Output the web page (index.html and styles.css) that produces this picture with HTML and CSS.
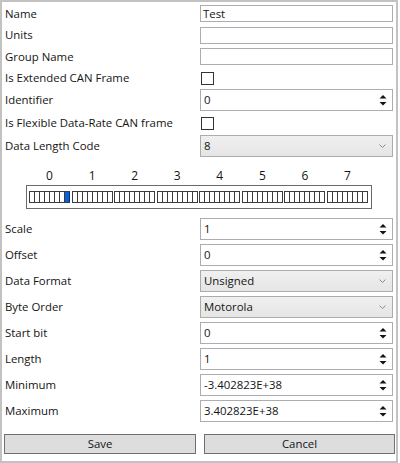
FILE: index.html
```html
<!DOCTYPE html>
<html>
<head>
<meta charset="utf-8">
<link rel="stylesheet" href="styles.css">
</head>
<body>
<div class="frame">
  <div class="form">
    <div class="row r21"><span class="label">Name</span><div class="text">Test</div></div>
    <div class="row r22"><span class="label">Units</span><div class="text"></div></div>
    <div class="row r21"><span class="label">Group Name</span><div class="text"></div></div>
    <div class="row r22"><span class="label">Is Extended CAN Frame</span><div><span class="check"></span></div></div>
    <div class="row r22"><span class="label">Identifier</span><div class="spin"><span class="val">0</span><svg class="arrows" width="8" height="14" viewBox="0 0 8 14"><polygon points="0.5,5.5 4,2 7.5,5.5"/><polygon points="0.5,9 4,12.5 7.5,9"/></svg></div></div>
    <div class="row r24"><span class="label">Is Flexible Data-Rate CAN frame</span><div><span class="check"></span></div></div>
    <div class="row r22"><span class="label">Data Length Code</span><div class="combo"><span class="val">8</span><svg class="chev" width="7" height="4" viewBox="0 0 7 4"><polyline points="0.5,0.5 3.5,3.5 6.5,0.5"/></svg></div></div>
  </div>

  <div class="bits">
    <div class="bit-labels">
      <span>0</span><span>1</span><span>2</span><span>3</span><span>4</span><span>5</span><span>6</span><span>7</span>
    </div>
    <div class="bit-box">
      <div class="byte"><i></i><i></i><i></i><i></i><i></i><i></i><i></i><i class="on"></i></div>
      <div class="byte"><i></i><i></i><i></i><i></i><i></i><i></i><i></i><i></i></div>
      <div class="byte"><i></i><i></i><i></i><i></i><i></i><i></i><i></i><i></i></div>
      <div class="byte"><i></i><i></i><i></i><i></i><i></i><i></i><i></i><i></i></div>
      <div class="byte"><i></i><i></i><i></i><i></i><i></i><i></i><i></i><i></i></div>
      <div class="byte"><i></i><i></i><i></i><i></i><i></i><i></i><i></i><i></i></div>
      <div class="byte"><i></i><i></i><i></i><i></i><i></i><i></i><i></i><i></i></div>
      <div class="byte"><i></i><i></i><i></i><i></i><i></i><i></i><i></i><i></i></div>
    </div>
  </div>

  <div class="form lower">
    <div class="row r26"><span class="label">Scale</span><div class="spin"><span class="val">1</span><svg class="arrows" width="8" height="14" viewBox="0 0 8 14"><polygon points="0.5,5.5 4,2 7.5,5.5"/><polygon points="0.5,9 4,12.5 7.5,9"/></svg></div></div>
    <div class="row r26"><span class="label">Offset</span><div class="spin"><span class="val">0</span><svg class="arrows" width="8" height="14" viewBox="0 0 8 14"><polygon points="0.5,5.5 4,2 7.5,5.5"/><polygon points="0.5,9 4,12.5 7.5,9"/></svg></div></div>
    <div class="row r26"><span class="label">Data Format</span><div class="combo"><span class="val">Unsigned</span><svg class="chev" width="7" height="4" viewBox="0 0 7 4"><polyline points="0.5,0.5 3.5,3.5 6.5,0.5"/></svg></div></div>
    <div class="row r26"><span class="label">Byte Order</span><div class="combo"><span class="val">Motorola</span><svg class="chev" width="7" height="4" viewBox="0 0 7 4"><polyline points="0.5,0.5 3.5,3.5 6.5,0.5"/></svg></div></div>
    <div class="row r26"><span class="label">Start bit</span><div class="spin"><span class="val">0</span><svg class="arrows" width="8" height="14" viewBox="0 0 8 14"><polygon points="0.5,5.5 4,2 7.5,5.5"/><polygon points="0.5,9 4,12.5 7.5,9"/></svg></div></div>
    <div class="row r26"><span class="label">Length</span><div class="spin"><span class="val">1</span><svg class="arrows" width="8" height="14" viewBox="0 0 8 14"><polygon points="0.5,5.5 4,2 7.5,5.5"/><polygon points="0.5,9 4,12.5 7.5,9"/></svg></div></div>
    <div class="row r26"><span class="label">Minimum</span><div class="spin"><span class="val">-3.402823E+38</span><svg class="arrows" width="8" height="14" viewBox="0 0 8 14"><polygon points="0.5,5.5 4,2 7.5,5.5"/><polygon points="0.5,9 4,12.5 7.5,9"/></svg></div></div>
    <div class="row r26"><span class="label">Maximum</span><div class="spin"><span class="val">3.402823E+38</span><svg class="arrows" width="8" height="14" viewBox="0 0 8 14"><polygon points="0.5,5.5 4,2 7.5,5.5"/><polygon points="0.5,9 4,12.5 7.5,9"/></svg></div></div>
  </div>

  <div class="buttons">
    <div class="btn save">Save</div>
    <div class="btn cancel">Cancel</div>
  </div>
</div>
</body>
</html>
```

FILE: styles.css
```css
html, body {
  margin: 0;
  padding: 0;
  background: #ffffff;
}

body {
  font-family: "Open Sans", "Liberation Sans", sans-serif;
  font-size: 11.4px;
  color: #141414;
}

.frame {
  box-sizing: border-box;
  width: 398px;
  height: 463px;
  border: 2px solid #c2c2c2;
  padding-top: 1px;
  background: #ffffff;
}

.form {
  display: flex;
  flex-direction: column;
}

.row {
  display: grid;
  grid-template-columns: 195px 193px;
  padding-left: 3px;
  align-items: center;
}

.r21 { height: 21px; }
.r22 { height: 22px; }
.r24 { height: 24px; }
.r26 { height: 26px; }

.label {
  white-space: nowrap;
  line-height: 14px;
}

.text {
  box-sizing: border-box;
  height: 17px;
  border: 1px solid #abadb3;
  background: #fff;
  padding-left: 2px;
  line-height: 15px;
}

.check {
  display: block;
  box-sizing: border-box;
  width: 13px;
  height: 13px;
  margin-left: 1px;
  border: 1px solid #333333;
  background: #ffffff;
}

.spin, .combo {
  box-sizing: border-box;
  height: 22px;
  display: flex;
  align-items: center;
  justify-content: space-between;
  padding-left: 3px;
}

.spin {
  border: 1px solid #abadb3;
  background: #fff;
  padding-right: 5px;
}

.combo {
  border: 1px solid #acacac;
  background: linear-gradient(#f0f0f0, #e5e5e5);
  padding-right: 6px;
}

.val {
  line-height: 14px;
}

.arrows polygon {
  fill: #141414;
}

.chev polyline {
  fill: none;
  stroke: #8a8a8a;
  stroke-width: 1;
}

.bits {
  margin-left: 24px;
  width: 346px;
}

.bit-labels {
  display: flex;
  justify-content: space-between;
  margin-top: 12px;
  height: 14px;
  padding: 0 4px 0 3px;
  font-size: 12px;
  line-height: 14px;
}

.bit-labels span {
  width: 41px;
  text-align: center;
}

.bit-box {
  box-sizing: border-box;
  margin-top: 2px;
  height: 24px;
  border: 1px solid #6a6a6a;
  padding: 5px 3px 0 2px;
  display: flex;
  justify-content: space-between;
}

.byte {
  display: flex;
  height: 12px;
  box-sizing: border-box;
  border: 1px solid #3c3c3c;
  border-right: none;
}

.byte i {
  display: block;
  width: 4px;
  height: 10px;
  border-right: 1px solid #3c3c3c;
  background: #ffffff;
}

.byte i.on {
  background: #0a5fd6;
  border-right-color: #07327a;
}

.lower {
  margin-top: 7px;
}

.buttons {
  display: flex;
  gap: 8px;
  margin-top: 10px;
  padding-left: 2px;
}

.btn {
  box-sizing: border-box;
  height: 20px;
  border: 1px solid #707070;
  background: #dddddd;
  text-align: center;
  line-height: 18px;
}

.save { width: 192px; }
.cancel { width: 191px; }
```
